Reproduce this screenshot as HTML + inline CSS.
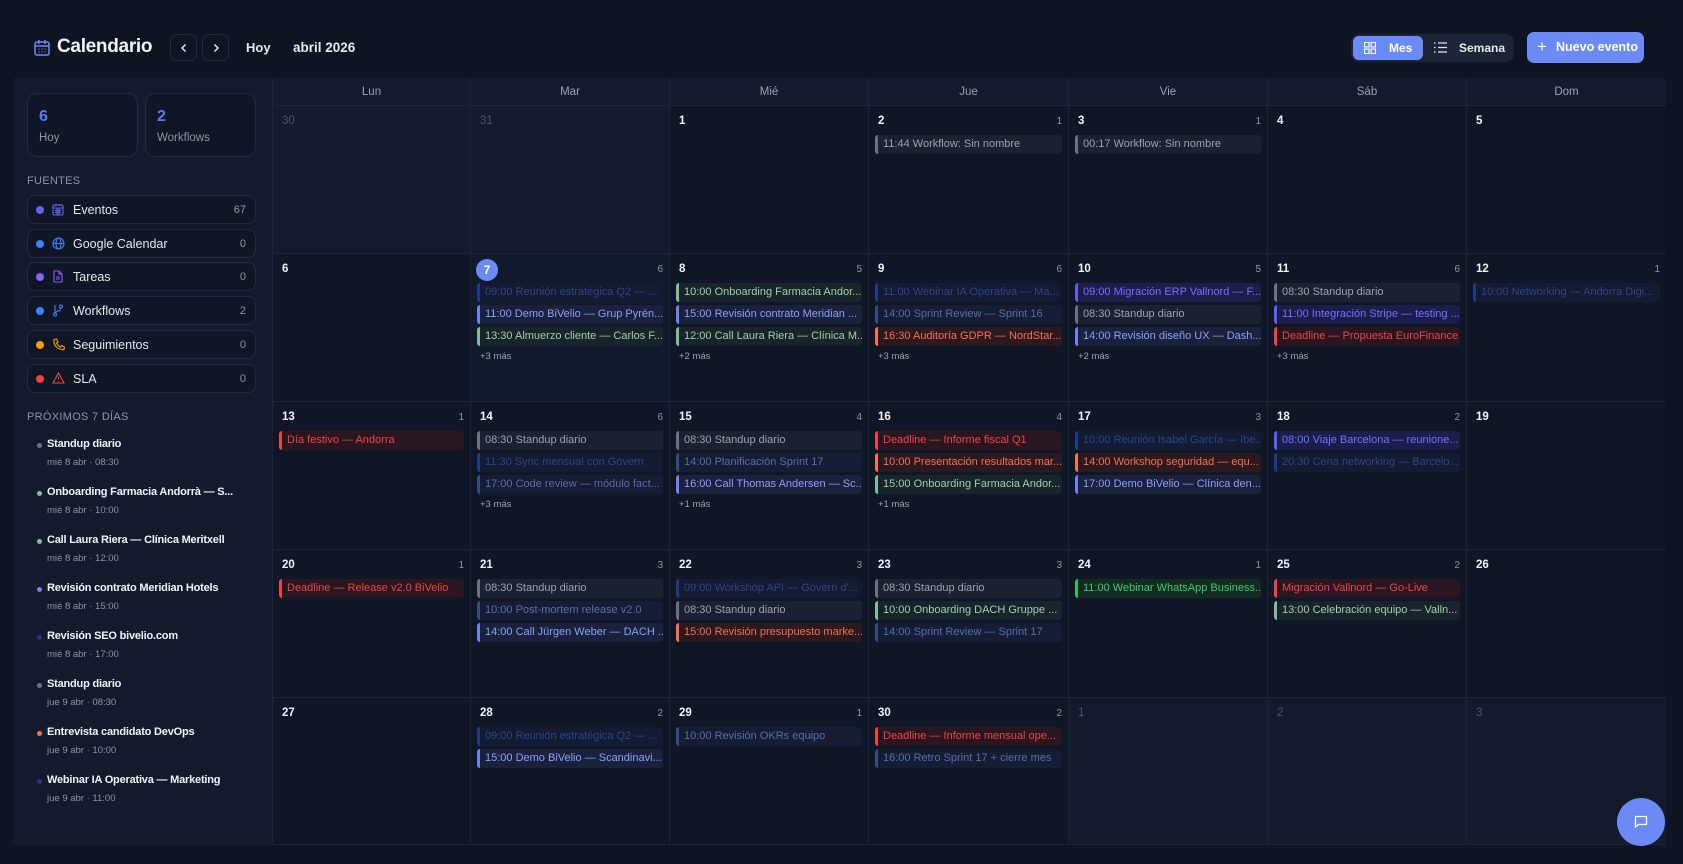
<!DOCTYPE html>
<html><head><meta charset="utf-8"><style>
*{box-sizing:border-box;margin:0;padding:0}
body{width:1683px;height:864px;background:#0e1422;font-family:"Liberation Sans",sans-serif;color:#e5e7eb;position:relative;overflow:hidden}
.abs{position:absolute}
.title{left:57px;top:36px;font-size:19px;font-weight:700;color:#f1f5f9;letter-spacing:-0.3px}
.nb{width:27px;height:27px;border:1px solid #1f2a3d;border-radius:7px;top:34px;display:flex;align-items:center;justify-content:center}
.hb{top:40px;font-size:13px;font-weight:700;color:#e5e7eb}
.tog{left:1351px;top:34px;width:163px;height:28px;background:#1c2538;border-radius:8px}
.mes{left:1353px;top:36px;width:70px;height:24px;background:#6b8af5;border-radius:6px;font-size:12px;font-weight:700;color:#fff}
.newb{left:1527px;top:32px;width:117px;height:31px;background:#6b8af5;border-radius:7px;font-size:12.5px;font-weight:700;color:#fff}
.panel{left:13px;top:78px;width:1653px;height:767px;background:#111827;border:1px solid #1c2538}
.side{left:13px;top:78px;width:259px;height:767px;background:#121a2b}
.stat{top:93px;width:111px;height:64px;border:1px solid #222c3f;border-radius:10px;background:#0f1625}
.stat b{position:absolute;left:11px;top:14px;font-size:16px;color:#5b7cf0}
.stat span{position:absolute;left:11px;top:38px;font-size:11.5px;color:#8b95a7}
.lbl{font-size:11px;color:#8b95a7;letter-spacing:0.3px}
.src{left:27px;width:229px;height:29px;border:1px solid #222c3f;border-radius:8px;background:#0f1625;font-size:12.5px;color:#e5e7eb}
.src .dot{position:absolute;left:8px;top:10px;width:8px;height:8px;border-radius:50%}
.src svg{position:absolute;left:24px;top:7px}
.src .t{position:absolute;left:45px;top:7px}
.src .c{position:absolute;right:9px;top:8px;font-size:11px;color:#8b95a7}
.up{left:37px;font-size:11px}
.up .d{position:absolute;left:0;top:5px;width:5px;height:5px;border-radius:50%}
.up .t{position:absolute;left:10px;top:0;font-weight:700;color:#f1f5f9;white-space:nowrap;letter-spacing:-0.2px}
.up .s{position:absolute;left:10px;top:19px;font-size:9.5px;color:#8b95a7;white-space:nowrap}
.grid{left:272px;top:78px;width:1394px;height:767px;display:grid;grid-template-columns:198px 199px 199px 200px 199px 199px 200px;grid-template-rows:28px 148px 148px 148px 148px 147px}
.dh{background:#121a2b;border-left:1px solid #1c2538;border-bottom:1px solid #1c2538;font-size:11.5px;color:#9aa3b2;text-align:center;line-height:28px}
.cell{position:relative;border-left:1px solid #1c2538;border-bottom:1px solid #1c2538;background:#0f1625}
.cell.o{background:#121a2b}
.cell .n{position:absolute;left:9px;top:9px;font-size:11.5px;font-weight:700;color:#f1f5f9}
.cell.o .n{color:#4b5568;font-weight:400}
.cell .k{position:absolute;right:6px;top:10px;font-size:10px;color:#8b95a7}
.cell .today{position:absolute;left:5px;top:5px;width:22px;height:22px;border-radius:50%;background:#6b8af5;color:#fff;font-size:12px;font-weight:700;text-align:center;line-height:22px}
.ev{position:absolute;left:6px;right:6px;height:19px;border-radius:3px;border-left:3px solid;font-size:11px;line-height:19px;padding-left:5px;white-space:nowrap;overflow:hidden}
.e0{top:29px}.e1{top:51px}.e2{top:73px}
.more{position:absolute;left:9px;top:97px;font-size:9.5px;color:#9aa3b2}
.g{background:#1b2130;border-color:#6b7280;color:#9ca3af}
.d{background:#121b31;border-color:#1e3a8a;color:#2c4687}
.m{background:#141d33;border-color:#334c82;color:#5570a8}
.b{background:#19213b;border-color:#6b82f5;color:#8aa0ff}
.v{background:#1c1d4a;border-color:#5b5ff5;color:#6f73ff}
.gr{background:#172429;border-color:#7fbf98;color:#9dd1ad}
.G{background:#132a22;border-color:#22c55e;color:#34d068}
.r{background:#2a1620;border-color:#ef4444;color:#ef4444}
.o2{background:#2a1a20;border-color:#f9714f;color:#fb6d4c}
</style></head><body>
<svg class="abs" style="left:34px;top:39px" width="16" height="17" viewBox="0 0 16 17" fill="none" stroke="#6b8af5" stroke-width="1.5"><rect x="1" y="3" width="14" height="13" rx="2"/><path d="M1 7h14M5 1v4M11 1v4"/><path d="M4.5 10h1M7.5 10h1M10.5 10h1M4.5 13h1M7.5 13h1M10.5 13h1" stroke-width="1.3"/></svg>
<div class="abs title">Calendario</div>
<div class="abs nb" style="left:170px"><svg width="10" height="10" viewBox="0 0 10 10" fill="none" stroke="#e5e7eb" stroke-width="1.5"><path d="M6.5 1.5L3 5l3.5 3.5"/></svg></div>
<div class="abs nb" style="left:202px"><svg width="10" height="10" viewBox="0 0 10 10" fill="none" stroke="#e5e7eb" stroke-width="1.5"><path d="M3.5 1.5L7 5 3.5 8.5"/></svg></div>
<div class="abs hb" style="left:246px">Hoy</div>
<div class="abs hb" style="left:293px;font-size:13.5px">abril 2026</div>
<div class="abs tog"></div>
<div class="abs mes"><svg style="position:absolute;left:11px;top:6px" width="12" height="12" viewBox="0 0 12 12" fill="none" stroke="#fff" stroke-width="1.1"><rect x="0.5" y="0.5" width="4.5" height="4.5"/><rect x="7" y="0.5" width="4.5" height="4.5"/><rect x="0.5" y="7" width="4.5" height="4.5"/><rect x="7" y="7" width="4.5" height="4.5"/></svg><span style="position:absolute;left:36px;top:5px">Mes</span></div>
<svg class="abs" style="left:1434px;top:42px" width="13" height="11" viewBox="0 0 13 11" fill="none" stroke="#e5e7eb" stroke-width="1.2"><path d="M0 1h1.5M0 5.5h1.5M0 10h1.5M4 1h9M4 5.5h9M4 10h9"/></svg>
<div class="abs" style="left:1459px;top:41px;font-size:12px;font-weight:700;color:#e5e7eb">Semana</div>
<div class="abs newb"><span style="position:absolute;left:10px;top:5px;font-size:17px;font-weight:400">+</span><span style="position:absolute;left:29px;top:8px">Nuevo evento</span></div>
<div class="abs panel"></div>
<div class="abs side"></div>
<div class="abs stat" style="left:27px"><b>6</b><span>Hoy</span></div>
<div class="abs stat" style="left:145px"><b>2</b><span>Workflows</span></div>
<div class="abs lbl" style="left:27px;top:175px">FUENTES</div>
<div class="abs src" style="top:195px"><i class="dot" style="background:#6366f1"></i><svg width="12" height="13" viewBox="0 0 12 13" fill="none" stroke="#6366f1" stroke-width="1.1"><rect x="1" y="2" width="10" height="10" rx="1"/><path d="M1 5h10M4 1v2M8 1v2M3 7.5h6M3 9.5h6M5 5v7M7 5v7"/></svg><span class="t">Eventos</span><span class="c">67</span></div>
<div class="abs src" style="top:229px"><i class="dot" style="background:#3b82f6"></i><svg width="13" height="13" viewBox="0 0 13 13" fill="none" stroke="#3b82f6" stroke-width="1.1"><circle cx="6.5" cy="6.5" r="5.5"/><ellipse cx="6.5" cy="6.5" rx="2.5" ry="5.5"/><path d="M1 6.5h11"/></svg><span class="t">Google Calendar</span><span class="c">0</span></div>
<div class="abs src" style="top:262px"><i class="dot" style="background:#8b5cf6"></i><svg width="12" height="13" viewBox="0 0 12 13" fill="none" stroke="#8b5cf6" stroke-width="1.1"><path d="M2 1h5l3 3v8H2z M7 1v3h3 M4 7h4M4 9h4"/></svg><span class="t">Tareas</span><span class="c">0</span></div>
<div class="abs src" style="top:296px"><i class="dot" style="background:#3b82f6"></i><svg width="12" height="13" viewBox="0 0 12 13" fill="none" stroke="#3b82f6" stroke-width="1.1"><circle cx="3" cy="10.5" r="1.5"/><circle cx="9" cy="2.5" r="1.5"/><path d="M3 1v8M9 4c0 4-6 3-6 5"/></svg><span class="t">Workflows</span><span class="c">2</span></div>
<div class="abs src" style="top:330px"><i class="dot" style="background:#f59e0b"></i><svg width="13" height="13" viewBox="0 0 13 13" fill="none" stroke="#f59e0b" stroke-width="1.1"><path d="M2 1.5l2.5-.5 1.5 3-1.5 1c1 2 2 3 4 4l1-1.5 3 1.5-.5 2.5C6 12 1 7 2 1.5z"/></svg><span class="t">Seguimientos</span><span class="c">0</span></div>
<div class="abs src" style="top:364px"><i class="dot" style="background:#ef4444"></i><svg width="13" height="12" viewBox="0 0 13 12" fill="none" stroke="#ef4444" stroke-width="1.1"><path d="M6.5 1L12 11H1z M6.5 4.5v3M6.5 9v.5"/></svg><span class="t">SLA</span><span class="c">0</span></div>
<div class="abs lbl" style="left:27px;top:411px">PRÓXIMOS 7 DÍAS</div>
<div class="abs up" style="top:438px"><i class="d" style="background:#6b7280"></i><span class="t">Standup diario</span><span class="s">mié 8 abr · 08:30</span></div>
<div class="abs up" style="top:486px"><i class="d" style="background:#7fbf98"></i><span class="t">Onboarding Farmacia Andorrà — S...</span><span class="s">mié 8 abr · 10:00</span></div>
<div class="abs up" style="top:534px"><i class="d" style="background:#7fbf98"></i><span class="t">Call Laura Riera — Clínica Meritxell</span><span class="s">mié 8 abr · 12:00</span></div>
<div class="abs up" style="top:582px"><i class="d" style="background:#6b82f5"></i><span class="t">Revisión contrato Meridian Hotels</span><span class="s">mié 8 abr · 15:00</span></div>
<div class="abs up" style="top:630px"><i class="d" style="background:#1e3a8a"></i><span class="t">Revisión SEO bivelio.com</span><span class="s">mié 8 abr · 17:00</span></div>
<div class="abs up" style="top:678px"><i class="d" style="background:#6b7280"></i><span class="t">Standup diario</span><span class="s">jue 9 abr · 08:30</span></div>
<div class="abs up" style="top:726px"><i class="d" style="background:#f9714f"></i><span class="t">Entrevista candidato DevOps</span><span class="s">jue 9 abr · 10:00</span></div>
<div class="abs up" style="top:774px"><i class="d" style="background:#1e3a8a"></i><span class="t">Webinar IA Operativa — Marketing</span><span class="s">jue 9 abr · 11:00</span></div>

<div class="abs grid">
<div class="dh">Lun</div><div class="dh">Mar</div><div class="dh">Mié</div><div class="dh">Jue</div><div class="dh">Vie</div><div class="dh">Sáb</div><div class="dh">Dom</div>

<div class="cell o"><span class="n">30</span></div>
<div class="cell o"><span class="n">31</span></div>
<div class="cell"><span class="n">1</span></div>
<div class="cell"><span class="n">2</span><span class="k">1</span><div class="ev e0 g">11:44 Workflow: Sin nombre</div></div>
<div class="cell"><span class="n">3</span><span class="k">1</span><div class="ev e0 g">00:17 Workflow: Sin nombre</div></div>
<div class="cell"><span class="n">4</span></div>
<div class="cell"><span class="n">5</span></div>

<div class="cell"><span class="n">6</span></div>
<div class="cell" style="background:#111a2c"><span class="today">7</span><span class="k">6</span><div class="ev e0 d">09:00 Reunión estratégica Q2 — ...</div><div class="ev e1 b">11:00 Demo BiVelio — Grup Pyrén...</div><div class="ev e2 gr">13:30 Almuerzo cliente — Carlos F...</div><span class="more">+3 más</span></div>
<div class="cell"><span class="n">8</span><span class="k">5</span><div class="ev e0 gr">10:00 Onboarding Farmacia Andor...</div><div class="ev e1 b">15:00 Revisión contrato Meridian ...</div><div class="ev e2 gr">12:00 Call Laura Riera — Clínica M...</div><span class="more">+2 más</span></div>
<div class="cell"><span class="n">9</span><span class="k">6</span><div class="ev e0 d">11:00 Webinar IA Operativa — Ma...</div><div class="ev e1 m">14:00 Sprint Review — Sprint 16</div><div class="ev e2 o2">16:30 Auditoría GDPR — NordStar...</div><span class="more">+3 más</span></div>
<div class="cell"><span class="n">10</span><span class="k">5</span><div class="ev e0 v">09:00 Migración ERP Vallnord — F...</div><div class="ev e1 g">08:30 Standup diario</div><div class="ev e2 b">14:00 Revisión diseño UX — Dash...</div><span class="more">+2 más</span></div>
<div class="cell"><span class="n">11</span><span class="k">6</span><div class="ev e0 g">08:30 Standup diario</div><div class="ev e1 v">11:00 Integración Stripe — testing ...</div><div class="ev e2 r">Deadline — Propuesta EuroFinance</div><span class="more">+3 más</span></div>
<div class="cell"><span class="n">12</span><span class="k">1</span><div class="ev e0 d">10:00 Networking — Andorra Digi...</div></div>

<div class="cell"><span class="n">13</span><span class="k">1</span><div class="ev e0 r">Día festivo — Andorra</div></div>
<div class="cell"><span class="n">14</span><span class="k">6</span><div class="ev e0 g">08:30 Standup diario</div><div class="ev e1 d">11:30 Sync mensual con Govern</div><div class="ev e2 m">17:00 Code review — módulo fact...</div><span class="more">+3 más</span></div>
<div class="cell"><span class="n">15</span><span class="k">4</span><div class="ev e0 g">08:30 Standup diario</div><div class="ev e1 m">14:00 Planificación Sprint 17</div><div class="ev e2 b">16:00 Call Thomas Andersen — Sc...</div><span class="more">+1 más</span></div>
<div class="cell"><span class="n">16</span><span class="k">4</span><div class="ev e0 r">Deadline — Informe fiscal Q1</div><div class="ev e1 o2">10:00 Presentación resultados mar...</div><div class="ev e2 gr">15:00 Onboarding Farmacia Andor...</div><span class="more">+1 más</span></div>
<div class="cell"><span class="n">17</span><span class="k">3</span><div class="ev e0 d">10:00 Reunión Isabel García — Ibe...</div><div class="ev e1 o2">14:00 Workshop seguridad — equ...</div><div class="ev e2 b">17:00 Demo BiVelio — Clínica den...</div></div>
<div class="cell"><span class="n">18</span><span class="k">2</span><div class="ev e0 v">08:00 Viaje Barcelona — reunione...</div><div class="ev e1 d">20:30 Cena networking — Barcelo...</div></div>
<div class="cell"><span class="n">19</span></div>

<div class="cell"><span class="n">20</span><span class="k">1</span><div class="ev e0 r">Deadline — Release v2.0 BiVelio</div></div>
<div class="cell"><span class="n">21</span><span class="k">3</span><div class="ev e0 g">08:30 Standup diario</div><div class="ev e1 m">10:00 Post-mortem release v2.0</div><div class="ev e2 b">14:00 Call Jürgen Weber — DACH ...</div></div>
<div class="cell"><span class="n">22</span><span class="k">3</span><div class="ev e0 d">09:00 Workshop API — Govern d'...</div><div class="ev e1 g">08:30 Standup diario</div><div class="ev e2 o2">15:00 Revisión presupuesto marke...</div></div>
<div class="cell"><span class="n">23</span><span class="k">3</span><div class="ev e0 g">08:30 Standup diario</div><div class="ev e1 gr">10:00 Onboarding DACH Gruppe ...</div><div class="ev e2 m">14:00 Sprint Review — Sprint 17</div></div>
<div class="cell"><span class="n">24</span><span class="k">1</span><div class="ev e0 G">11:00 Webinar WhatsApp Business...</div></div>
<div class="cell"><span class="n">25</span><span class="k">2</span><div class="ev e0 r">Migración Vallnord — Go-Live</div><div class="ev e1 gr">13:00 Celebración equipo — Valln...</div></div>
<div class="cell"><span class="n">26</span></div>

<div class="cell"><span class="n">27</span></div>
<div class="cell"><span class="n">28</span><span class="k">2</span><div class="ev e0 d">09:00 Reunión estratégica Q2 — ...</div><div class="ev e1 b">15:00 Demo BiVelio — Scandinavi...</div></div>
<div class="cell"><span class="n">29</span><span class="k">1</span><div class="ev e0 m">10:00 Revisión OKRs equipo</div></div>
<div class="cell"><span class="n">30</span><span class="k">2</span><div class="ev e0 r">Deadline — Informe mensual ope...</div><div class="ev e1 m">16:00 Retro Sprint 17 + cierre mes</div></div>
<div class="cell o"><span class="n">1</span></div>
<div class="cell o"><span class="n">2</span></div>
<div class="cell o"><span class="n">3</span></div>
</div>
<div class="abs" style="left:1617px;top:798px;width:48px;height:48px;border-radius:50%;background:#6b8af5"><svg style="position:absolute;left:17px;top:17px" width="14" height="14" viewBox="0 0 14 14" fill="none" stroke="#fff" stroke-width="1.3"><path d="M1.5 1.5h11v8h-8l-3 2.5z"/></svg></div>
</body></html>
